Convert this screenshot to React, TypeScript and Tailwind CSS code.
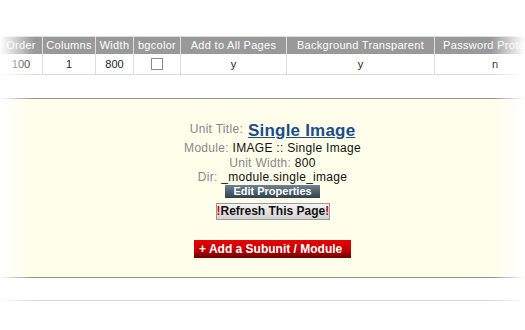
import React from "react";

const cols = [
  { w: "w-[43px]", h: "Order", v: "100" },
  { w: "w-[53px]", h: "Columns", v: "1" },
  { w: "w-[38px]", h: "Width", v: "800" },
  { w: "w-[47px]", h: "bgcolor", v: "" },
  { w: "w-[106px]", h: "Add to All Pages", v: "y" },
  { w: "w-[148px]", h: "Background Transparent", v: "y" },
  { w: "w-[120px]", h: "Password Protected", v: "n" },
];

export default function App() {
  return (
    <div
      className="relative w-[525px] h-[330px] overflow-hidden bg-white"
      style={{ fontFamily: '"Liberation Sans", Arial, sans-serif' }}
    >
      <div className="h-[36px]" />
      {/* table */}
      <div className="border-t border-[#dcdcdc] w-[600px]">
        <div className="flex h-[17px] bg-[#999999] text-white text-[11px] leading-[17px]">
          {cols.map((c, i) => (
            <div
              key={i}
              className={`${c.w} shrink-0 text-center whitespace-nowrap overflow-hidden tracking-[0.3px] ${
                i < cols.length - 1 ? "border-r border-[#dedede]" : ""
              }`}
            >
              {c.h}
            </div>
          ))}
        </div>
        <div className="flex h-[21px] border-b border-[#dcdcdc] text-[11px] leading-[20px] text-[#222]">
          {cols.map((c, i) => (
            <div
              key={i}
              className={`${c.w} shrink-0 flex items-center justify-center whitespace-nowrap ${
                i < cols.length - 1 ? "border-r border-[#dcdcdc]" : ""
              }`}
            >
              {c.h === "bgcolor" ? (
                <div className="w-[12px] h-[12px] border border-[#8a8a8a] bg-white" />
              ) : (
                c.v
              )}
            </div>
          ))}
        </div>
      </div>

      <div className="h-[23px]" />
      <div className="border-t border-[#909090]" />
      {/* yellow unit */}
      <div className="h-[179px] bg-[#fefeea] border-b border-[#8f9080] flex flex-col items-center pt-[22px] pl-[20px] text-[12px] tracking-[0.3px]">
        <div className="flex items-end leading-[17px]">
          <span className="text-[#888] mr-[5px] mb-[1px]">Unit Title:</span>
          <span className="text-[17px] font-bold text-[#1c4b8c] underline tracking-[0.2px]">
            Single Image
          </span>
        </div>
        <div className="leading-[14px] mt-[2px]">
          <span className="text-[#888]">Module:</span>{" "}
          <span className="text-[#111]">IMAGE :: Single Image</span>
        </div>
        <div className="leading-[14px] mt-[1px]">
          <span className="text-[#888]">Unit Width:</span>{" "}
          <span className="text-[#111]">800</span>
        </div>
        <div className="leading-[14px]">
          <span className="text-[#888]">Dir:</span>{" "}
          <span className="text-[#111]">_module.single_image</span>
        </div>
        <div className="mt-[1px] w-[95px] h-[13px] bg-gradient-to-b from-[#6f8594] to-[#2f414d] text-white font-bold text-[11px] leading-[13px] text-center tracking-normal whitespace-nowrap">
          Edit Properties
        </div>
        <div className="mt-[5px] w-[114px] h-[17px] border border-[#9a9a9a] bg-gradient-to-b from-[#f4f4f4] to-[#d2d2d2] font-bold text-[12px] leading-[15px] text-center text-[#111] tracking-normal whitespace-nowrap">
          <span className="text-[#d00000]">!</span>Refresh This Page<span className="text-[#d00000]">!</span>
        </div>
        <div className="mt-[20px] w-[157px] h-[18px] bg-gradient-to-b from-[#e80000] via-[#c80000] to-[#6e0000] text-white font-bold text-[12px] leading-[18px] pl-[5px] tracking-normal whitespace-nowrap">
          + Add a Subunit / Module
        </div>
      </div>
      <div className="h-[22px]" />
      <div className="border-t border-[#d8d8d8]" />

      {/* edge fades */}
      <div className="absolute left-0 top-0 bottom-0 w-[34px] bg-gradient-to-r from-white to-transparent pointer-events-none" />
      <div className="absolute right-0 top-0 bottom-0 w-[34px] bg-gradient-to-l from-white to-transparent pointer-events-none" />
    </div>
  );
}
